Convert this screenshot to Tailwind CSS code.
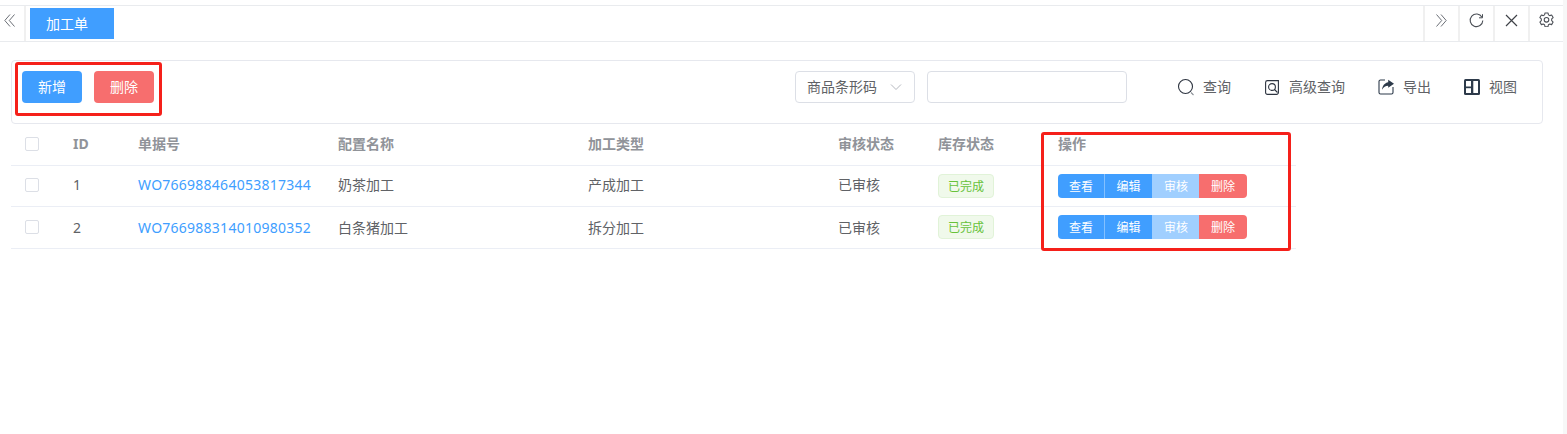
<!DOCTYPE html>
<html lang="zh">
<head>
<meta charset="utf-8">
<script src="https://cdn.jsdelivr.net/npm/@tailwindcss/browser@4"></script>
</head>
<body class="bg-white font-['Noto_Sans','Noto_Sans_CJK_SC',sans-serif] text-[#606266] text-[14px] overflow-hidden">
<div class="relative w-[1567px] h-[434px]">
  <div class="h-[5px]"></div>
  <div class="flex h-[37px] border-y border-[#e9ebee] box-border mr-[2px]">
    <div class="flex w-[26px] shrink-0 items-start border-r-2 border-[#f0f0f0] pl-[4px] pt-[8px]">
      <svg width="11" height="13" viewBox="0 0 11 13" fill="none" stroke="#6b6f76" stroke-width="1"><path d="M6 .5L.8 6.500 6 12.500M10.500 .5L5.300 6.500l5.200 6"/></svg>
    </div>
    <div class="flex-1 pl-[4px] pt-[2px]">
      <div class="flex h-[31px] w-[84px] items-center bg-[#409eff] pl-[16px] text-[14px] text-white">加工单</div>
    </div>
    <div class="flex shrink-0 pr-[2px]">
      <div class="flex w-[35px] items-start justify-center border-l-2 border-[#f0f0f0] pt-[8px]"><svg width="11" height="13" viewBox="0 0 11 13" fill="none" stroke="#6b6f76" stroke-width="1"><path d="M.5 .5l5.200 6-5.200 6M5 .5l5.200 6-5.200 6"/></svg></div>
      <div class="flex w-[35px] items-start justify-center border-l-2 border-[#f0f0f0] pt-[7px]"><svg width="15" height="15" viewBox="0 0 15 15" fill="none" stroke="#4b4f56" stroke-width="1.100"><path d="M13 4.200A6.300 6.300 0 1 0 13.800 7.500"/><path d="M13.500 1.200v3.600H10" stroke-width="1"/></svg></div>
      <div class="flex w-[35px] items-start justify-center border-l-2 border-[#f0f0f0] pt-[8px]"><svg width="13" height="13" viewBox="0 0 13 13" fill="none" stroke="#3f4248" stroke-width="1.200"><path d="M1 1l11 11M12 1L1 12"/></svg></div>
      <div class="flex w-[35px] items-start justify-center border-l-2 border-[#f0f0f0] pt-[6px]"><svg width="15" height="15" viewBox="0 0 24 24" fill="none" stroke="#4b4f56" stroke-width="1.700" stroke-linejoin="round"><path d="M9.600 1.500h4.800l.7 3.100 2.100 1.200 3-1 2.400 4.100-2.300 2.200v2.800l2.300 2.200-2.400 4.100-3-1-2.100 1.200-.7 3.100H9.600l-.7-3.100-2.100-1.200-3 1L1.400 16.100l2.300-2.200v-2.800L1.400 8.900l2.400-4.100 3 1 2.100-1.200z"/><circle cx="12" cy="12.500" r="3.700"/></svg></div>
    </div>
  </div>

  <div class="mx-[11px] mt-[18px] w-[1532px]">
    <div class="flex h-[64px] items-start justify-between rounded border border-[#e6e8ee] pl-[10px] pr-[25px] pt-[10px]">
      <div class="flex gap-[12px]">
        <button class="h-[32px] w-[60px] rounded-[4px] bg-[#409eff] pb-[2px] text-[14px] text-white">新增</button>
        <button class="h-[32px] w-[60px] rounded-[4px] bg-[#f76e6e] pb-[2px] text-[14px] text-white">删除</button>
      </div>
      <div class="flex h-[32px] items-center">
        <div class="flex h-[32px] w-[120px] items-center justify-between rounded-[4px] border border-[#dcdfe6] pl-[11px] pr-[12px]">
          <span class="pb-[2px] text-[14px] text-[#606266]">商品条形码</span>
          <svg width="12" height="8" viewBox="0 0 12 8" fill="none" stroke="#b5b8bf" stroke-width="1"><path d="M1 1.500l5 5 5-5"/></svg>
        </div>
        <div class="ml-[12px] h-[32px] w-[200px] rounded-[4px] border border-[#dcdfe6]"></div>
        <div class="ml-[50px] flex items-center gap-[8px]">
          <svg width="18" height="18" viewBox="0 0 18 18" fill="none" stroke="#2d3440" stroke-width="1.100"><circle cx="8.500" cy="8.500" r="7"/><path d="M14 14.500l2.500 2.500" stroke="#8b8f96"/></svg>
          <span class="pb-[2px]">查询</span>
        </div>
        <div class="ml-[34px] flex items-center gap-[10px]">
          <svg width="14" height="15" viewBox="0 0 14 15" fill="none" stroke="#2d3440" stroke-width="1.100"><path d="M2.500 .6h10.900v11.400a2 2 0 0 1-2 2.400H2.500A1.900 1.900 0 0 1 .6 12.500V2.500A1.900 1.900 0 0 1 2.500 .6z"/><circle cx="7" cy="7" r="3.400"/><path d="M9.500 9.500l3 3"/></svg>
          <span class="pb-[2px]">高级查询</span>
        </div>
        <div class="ml-[33px] flex items-center gap-[9px]">
          <svg width="16" height="16" viewBox="0 0 16 16"><path d="M7 1H2.500A1.500 1.500 0 0 0 1 2.500v11A1.500 1.500 0 0 0 2.500 15h11a1.500 1.500 0 0 0 1.500-1.500V8" fill="none" stroke="#2d3a4a" stroke-width="1.100"/><path d="M10.200 .8L16 4.800 10.200 8.800V6.700C7.500 6.700 5.500 8 4 10.800 4.300 7 6.500 3.800 10.200 3.200z" fill="#2d3a4a"/></svg>
          <span class="pb-[2px]">导出</span>
        </div>
        <div class="ml-[33px] flex items-center gap-[9px]">
          <svg width="16" height="16" viewBox="0 0 16 16"><rect x="0" y="0" width="16" height="16" rx="1.500" fill="#2d3a4a"/><rect x="2" y="2" width="5" height="5.500" fill="#fff"/><rect x="2" y="9.200" width="5" height="4.800" fill="#fff"/><rect x="9.300" y="2" width="4.700" height="12" fill="#fff"/></svg>
          <span class="pb-[2px]">视图</span>
        </div>
      </div>
    </div>

    <div class="w-[1285px]">
      <div class="flex h-[42px] items-center border-b border-[#ebeef5] text-[14px] font-bold text-[#909399]">
        <div class="w-[52px] pb-px pl-[14px]"><div class="size-[14px] rounded-[2px] border border-[#dcdfe6]"></div></div>
        <div class="w-[65px] pb-[3px] pl-[10px]">ID</div>
        <div class="w-[200px] pb-[3px] pl-[10px]">单据号</div>
        <div class="w-[250px] pb-[3px] pl-[10px]">配置名称</div>
        <div class="w-[250px] pb-[3px] pl-[10px]">加工类型</div>
        <div class="w-[100px] pb-[3px] pl-[10px]">审核状态</div>
        <div class="w-[120px] pb-[3px] pl-[10px]">库存状态</div>
        <div class="flex-1 pb-[3px] pl-[10px]">操作</div>
      </div>
      <div class="flex h-[41px] items-center border-b border-[#ebeef5] text-[14px]">
        <div class="w-[52px] pb-[2px] pl-[14px]"><div class="size-[14px] rounded-[2px] border border-[#dcdfe6]"></div></div>
        <div class="w-[65px] pb-[3px] pl-[10px]">1</div>
        <div class="w-[200px] pb-[3px] pl-[10px] tracking-[0.25px] text-[#409eff]">WO766988464053817344</div>
        <div class="w-[250px] pb-[3px] pl-[10px]">奶茶加工</div>
        <div class="w-[250px] pb-[3px] pl-[10px]">产成加工</div>
        <div class="w-[100px] pb-[3px] pl-[10px]">已审核</div>
        <div class="w-[120px] pl-[10px]"><span class="flex h-[24px] w-[56px] items-center justify-center rounded-[4px] border border-[#e1f3d8] bg-[#f0f9eb] pt-[1px] text-[12px] text-[#67c23a]">已完成</span></div>
        <div class="flex flex-1 pl-[10px] text-[12px] text-white">
          <span class="flex h-[24px] w-[47px] items-center justify-center rounded-l-[4px] border-r border-[#a0cfff]/70 bg-[#409eff] pt-[1px]">查看</span>
          <span class="flex h-[24px] w-[47px] items-center justify-center bg-[#409eff] pt-[1px]">编辑</span>
          <span class="flex h-[24px] w-[47px] items-center justify-center border-l border-[#a0cfff] bg-[#a0cfff] pt-[1px]">审核</span>
          <span class="flex h-[24px] w-[48px] items-center justify-center rounded-r-[4px] bg-[#f76e6e] pt-[1px]">删除</span>
        </div>
      </div>
      <div class="flex h-[42px] items-center border-b border-[#ebeef5] pb-px text-[14px]">
        <div class="w-[52px] pl-[14px]"><div class="size-[14px] rounded-[2px] border border-[#dcdfe6]"></div></div>
        <div class="w-[65px] pl-[10px]">2</div>
        <div class="w-[200px] pl-[10px] tracking-[0.25px] text-[#409eff]">WO766988314010980352</div>
        <div class="w-[250px] pl-[10px]">白条猪加工</div>
        <div class="w-[250px] pl-[10px]">拆分加工</div>
        <div class="w-[100px] pl-[10px]">已审核</div>
        <div class="w-[120px] pl-[10px]"><span class="flex h-[24px] w-[56px] items-center justify-center rounded-[4px] border border-[#e1f3d8] bg-[#f0f9eb] pt-[1px] text-[12px] text-[#67c23a]">已完成</span></div>
        <div class="flex flex-1 pl-[10px] text-[12px] text-white">
          <span class="flex h-[24px] w-[47px] items-center justify-center rounded-l-[4px] border-r border-[#a0cfff]/70 bg-[#409eff] pt-[1px]">查看</span>
          <span class="flex h-[24px] w-[47px] items-center justify-center bg-[#409eff] pt-[1px]">编辑</span>
          <span class="flex h-[24px] w-[47px] items-center justify-center border-l border-[#a0cfff] bg-[#a0cfff] pt-[1px]">审核</span>
          <span class="flex h-[24px] w-[48px] items-center justify-center rounded-r-[4px] bg-[#f76e6e] pt-[1px]">删除</span>
        </div>
      </div>
    </div>
  </div>

  <div class="absolute left-[15px] top-[62px] h-[54px] w-[147px] rounded-[3px] border-[3px] border-[#f5201a]"></div>
  <div class="absolute left-[1041px] top-[132px] h-[119px] w-[250px] rounded-[3px] border-[3px] border-[#f5201a]"></div>
  <div class="absolute right-0 top-0 h-[434px] w-[4px] bg-[#f7f7f7]"></div>
</div>
</body>
</html>
